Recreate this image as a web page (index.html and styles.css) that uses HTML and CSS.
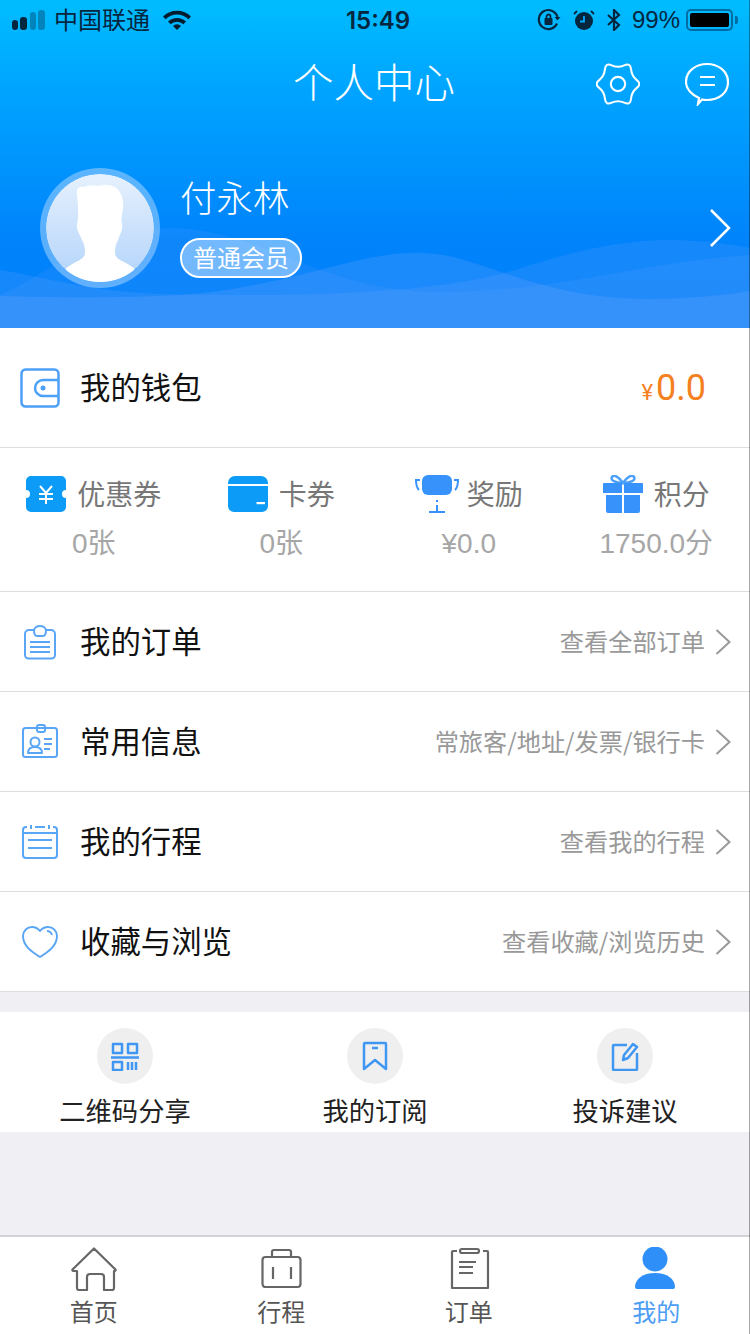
FILE: index.html
```html
<!DOCTYPE html>
<html lang="zh-CN">
<head>
<meta charset="utf-8">
<title>个人中心</title>
<link rel="stylesheet" href="styles.css">
</head>
<body>
<div class="app">
  <header class="header">
    <svg class="waves" viewBox="0 0 750 328" preserveAspectRatio="none" aria-hidden="true">
      <path class="wave-a" d="M0 295C40 280 90 228 170 228C260 228 320 292 440 292C560 292 640 262 750 255V328H0Z"/>
      <path class="wave-b" d="M0 296C60 298 130 298 180 295C260 290 330 265 375 257C400 252 420 252 435 254C480 258 530 292 620 298C670 301 720 296 750 291V328H0Z"/>
      <path class="wave-c" d="M0 270C30 274 90 292 160 294C260 296 420 298 515 270C570 252 620 240 670 240C700 240 730 244 750 248V328H0Z"/>
    </svg>
    <div class="status">
      <div class="status-left">
        <svg class="signal" viewBox="0 0 34 20"><rect x="0" y="10" width="6" height="10" rx="3"/><rect x="8" y="7" width="7" height="13" rx="3"/><rect class="dim" x="18" y="2" width="6" height="18" rx="3"/><rect class="dim" x="26" y="0" width="7" height="20" rx="3"/></svg>
        <span class="status-text">中国联通</span>
        <svg class="wifi" viewBox="0 0 28 20"><path d="M0 6.500a20 20 0 0 1 28 0l-2.600 2.800a16 16 0 0 0-22.800 0Z"/><path d="M5 11.500a13 13 0 0 1 18 0l-2.600 2.800a9 9 0 0 0-12.800 0Z"/><path d="M10 16a5.500 5.500 0 0 1 8 0l-4 4Z"/></svg>
      </div>
      <div class="status-time">15:49</div>
      <div class="status-right">
        <svg class="s-lock" viewBox="0 0 24 24"><path class="s-line" d="M20 15.500A9.500 9.500 0 1 1 20.500 9"/><path d="M17.500 9h6l-3 3.500Z"/><rect x="7.500" y="10" width="8" height="7" rx="1"/><path class="s-thin" d="M9.500 10V8.500a2 2 0 0 1 4 0V10"/></svg>
        <svg class="s-alarm" viewBox="0 0 22 22"><circle cx="11" cy="12" r="9"/><path class="s-cut" d="M11 7v5.500H7"/><path class="s-thin" d="M1 5l3-3M21 5l-3-3"/></svg>
        <svg class="s-bt" viewBox="0 0 16 22"><path class="s-line" d="M2 6l11 10-5 5V1l5 5L2 16"/></svg>
        <span class="s-pct">99%</span>
        <div class="battery"><div class="battery-fill"></div></div>
        <div class="battery-nub"></div>
      </div>
    </div>
    <div class="nav">
      <h1 class="nav-title">个人中心</h1>
      <div class="nav-actions">
        <svg class="nav-icon" viewBox="0 0 46 44"><path transform="translate(23 22)" d="M19.650-4.125Q25 0 19.650 4.125 14.300 8.250 13.650 15.400 13 22.500 6.500 19.500 0 16.500-6.500 19.500-13 22.500-13.650 15.400-14.300 8.250-19.650 4.125-25 0-19.650-4.125-14.300-8.250-13.650-15.400-13-22.500-6.500-19.500 0-16.500 6.500-19.500 13-22.500 13.650-15.400 14.300-8.250 19.650-4.125Z"/><circle cx="23" cy="22" r="7.500"/></svg>
        <svg class="nav-icon" viewBox="0 0 44 44"><path d="M13 42l1-6C7 33 1 27 1 20 1 9 11 2 22 2s21 7 21 18-9 18-21 18c-2 0-3.500 0-5-.5Z"/><path d="M15 15h15M15 23h15"/></svg>
      </div>
    </div>
    <div class="profile">
      <div class="avatar">
        <svg viewBox="0 0 108 108"><path d="M31 20C30 14 34 12 38 13 44 10 50 13 56 11 66 10 76 14 77 28 78 38 74 42 76 50 77 56 74 60 72 66 70 70 69 73 69 78 69 84 74 86 80 89L88 94V108H20V94L28 89C34 86 39 84 39 78 39 73 38 70 36 66 34 60 30 56 31 50 33 42 32 30 31 20Z"/></svg>
      </div>
      <div class="profile-info">
        <div class="profile-name">付永林</div>
        <div class="profile-badge">普通会员</div>
      </div>
      <svg class="profile-arrow" viewBox="0 0 22 40"><path d="M2 2l18 18L2 38"/></svg>
    </div>
  </header>

  <section class="wallet">
    <svg class="row-icon icon-wallet" viewBox="0 0 40 40"><rect x="1.500" y="1.500" width="37" height="37" rx="4"/><path d="M38 12H23a8 8 0 0 0 0 16h15"/><circle class="dot" cx="23" cy="20" r="2.500"/></svg>
    <span class="row-label">我的钱包</span>
    <span class="wallet-value"><small>¥</small>0.0</span>
  </section>

  <section class="stats">
    <div class="stat">
      <div class="stat-head">
        <svg class="stat-icon" viewBox="0 0 40 38"><path class="fill-sky" d="M5 1h30a5 5 0 0 1 5 5v9a4 4 0 0 0 0 8v9a5 5 0 0 1-5 5H5a5 5 0 0 1-5-5v-9a4 4 0 0 0 0-8V6a5 5 0 0 1 5-5Z"/><path class="yen" d="M14 11l6 7 6-7M13 19h14M13 24h14M20 18v11"/></svg>
        <span>优惠券</span>
      </div>
      <div class="stat-sub">0张</div>
    </div>
    <div class="stat">
      <div class="stat-head">
        <svg class="stat-icon" viewBox="0 0 40 38"><path class="fill-sky" d="M0 8a7 7 0 0 1 7-7h26a7 7 0 0 1 7 7v1H0ZM0 11h40v20a6 6 0 0 1-6 6H6a6 6 0 0 1-6-6Z"/><rect class="white-fill" x="28.500" y="27" width="8.500" height="2.200"/></svg>
        <span>卡券</span>
      </div>
      <div class="stat-sub">0张</div>
    </div>
    <div class="stat">
      <div class="stat-head stat-head-tight">
        <svg class="stat-icon trophy" viewBox="0 0 44 38"><rect class="fill-blue" x="7" y="0" width="30" height="20" rx="6"/><path class="trophy-line" d="M5 5H1c0 5 1 8 3 10M39 5h4c0 5-1 8-3 10M22 25v2M22 30v6M14 37h16"/></svg>
        <span>奖励</span>
      </div>
      <div class="stat-sub">¥0.0</div>
    </div>
    <div class="stat">
      <div class="stat-head">
        <svg class="stat-icon" viewBox="0 0 40 38"><path class="gift-bow" d="M20 8C16 2 11-1 9 2c-2 3 3 6 11 6 8 0 13-3 11-6-2-3-7 0-11 6Z"/><path class="fill-blue" d="M1 8h18v10H0V9a1 1 0 0 1 1-1ZM21 8h18a1 1 0 0 1 1 1v9H21ZM3 20h16v18H5a2 2 0 0 1-2-2ZM21 20h16v16a2 2 0 0 1-2 2H21Z"/></svg>
        <span>积分</span>
      </div>
      <div class="stat-sub">1750.0分</div>
    </div>
  </section>

  <section class="list">
    <a class="row">
      <svg class="row-icon line-icon" viewBox="0 0 40 40"><path d="M14 8H9a4 4 0 0 0-4 4v21a3.500 3.500 0 0 0 3.500 3.500h23a3.500 3.500 0 0 0 3.500-3.500V12a4 4 0 0 0-4-4h-5c-1-3-4-4-6-4s-5 1-6 4Z"/><path d="M14 8c0 3 1 6 3 6h6c2 0 3-3 3-6M10 20h20M10 25h20M10 30h20"/></svg>
      <span class="row-label">我的订单</span>
      <span class="row-hint">查看全部订单</span>
      <svg class="row-arrow" viewBox="0 0 16 26"><path d="M1.500 1l13 12-13 12"/></svg>
    </a>
    <a class="row">
      <svg class="row-icon line-icon" viewBox="0 0 40 40"><rect x="3" y="6" width="34" height="29" rx="2.500"/><rect x="17" y="3" width="8" height="7" rx="2"/><circle cx="15" cy="20" r="4.500"/><path d="M8 31c0-4 3-6 7-6s7 2 7 6ZM24 17h8M24 22h8M24 27h6"/></svg>
      <span class="row-label">常用信息</span>
      <span class="row-hint">常旅客/地址/发票/银行卡</span>
      <svg class="row-arrow" viewBox="0 0 16 26"><path d="M1.500 1l13 12-13 12"/></svg>
    </a>
    <a class="row">
      <svg class="row-icon line-icon" viewBox="0 0 40 40"><path d="M7 5H6a3 3 0 0 0-3 3v25a3 3 0 0 0 3 3h28a3 3 0 0 0 3-3V8a3 3 0 0 0-3-3h-1M15 5h10M11 3v4M29 3v4M3 11h34M8 18h24M8 26h24"/></svg>
      <span class="row-label">我的行程</span>
      <span class="row-hint">查看我的行程</span>
      <svg class="row-arrow" viewBox="0 0 16 26"><path d="M1.500 1l13 12-13 12"/></svg>
    </a>
    <a class="row">
      <svg class="row-icon line-icon" viewBox="0 0 40 40"><path d="M20 35C12 30 3 24 3 14 3 9 7 5 12 5c4 0 6 1.500 8 4 2-2.500 4-4 8-4 5 0 9 4 9 9 0 10-9 16-17 21Z"/><path d="M27 9c2 0 4 1 5 4"/></svg>
      <span class="row-label">收藏与浏览</span>
      <span class="row-hint">查看收藏/浏览历史</span>
      <svg class="row-arrow" viewBox="0 0 16 26"><path d="M1.500 1l13 12-13 12"/></svg>
    </a>
  </section>

  <section class="shortcuts">
    <div class="shortcut">
      <div class="shortcut-circle">
        <svg viewBox="0 0 30 30"><path d="M3 3h9v9H3ZM18 3h9v9h-9ZM3 21h9v8H3ZM1 16.500h28M18 21v8M22 21v8M26 21v8"/></svg>
      </div>
      <div class="shortcut-label">二维码分享</div>
    </div>
    <div class="shortcut">
      <div class="shortcut-circle">
        <svg viewBox="0 0 30 30"><path d="M5 2h20a1 1 0 0 1 1 1v25l-11-9-11 9V3a1 1 0 0 1 1-1ZM12 7h6"/></svg>
      </div>
      <div class="shortcut-label">我的订阅</div>
    </div>
    <div class="shortcut">
      <div class="shortcut-circle">
        <svg viewBox="0 0 30 30"><path d="M17 4H4a1 1 0 0 0-1 1v23a1 1 0 0 0 1 1h22a1 1 0 0 0 1-1V12M13 19l1-5L23 3l4 3-9 11Z"/></svg>
      </div>
      <div class="shortcut-label">投诉建议</div>
    </div>
  </section>

  <div class="spacer"></div>

  <nav class="tabs">
    <div class="tab">
      <svg class="tab-icon" viewBox="0 0 46 44"><path d="M6 41V24H2.500a1 1 0 0 1-.7-1.800L23 1.500l21.200 20.700a1 1 0 0 1-.7 1.800H43V41a2 2 0 0 1-2 2H33V30a3 3 0 0 0-3-3H19a3 3 0 0 0-3 3V43H8a2 2 0 0 1-2-2Z"/></svg>
      <span>首页</span>
    </div>
    <div class="tab">
      <svg class="tab-icon" viewBox="0 0 46 44"><rect x="4.500" y="10" width="38" height="30" rx="3"/><path d="M14 10V5a2 2 0 0 1 2-2h15a2 2 0 0 1 2 2v5M15 20v12M33 20v12"/></svg>
      <span>行程</span>
    </div>
    <div class="tab">
      <svg class="tab-icon" viewBox="0 0 46 44"><path d="M11 4H7a1 1 0 0 0-1 1v36h36V5a1 1 0 0 0-1-1h-4"/><rect x="14" y="2" width="19" height="4" rx="2"/><path d="M13 15h17M13 20h14M13 26h14"/></svg>
      <span>订单</span>
    </div>
    <div class="tab tab-active">
      <svg class="tab-icon" viewBox="0 0 46 44"><circle cx="22" cy="12" r="12.500"/><path d="M2 40c0-8 8-14 20-14s20 6 20 14a2 2 0 0 1-2 2H4a2 2 0 0 1-2-2Z"/></svg>
      <span>我的</span>
    </div>
  </nav>
</div>
</body>
</html>
```

FILE: styles.css
```css
* { box-sizing: border-box; margin: 0; padding: 0; }

html, body { width: 750px; height: 1334px; overflow: hidden; }

body {
  font-family: "Noto Sans CJK SC", "Noto Sans", sans-serif;
  background: #efeff4;
  color: #111;
}

.app {
  position: relative;
  width: 750px;
  height: 1334px;
  display: flex;
  flex-direction: column;
}

.app::after {
  content: "";
  position: absolute;
  top: 0;
  right: 0;
  bottom: 0;
  width: 1px;
  background: rgba(0, 0, 0, 0.35);
}

/* header */
.header {
  position: relative;
  height: 328px;
  flex: none;
  background: linear-gradient(180deg, #00bdff 0, #00a4ff 90px, #0083fb 240px, #0080fa 328px);
  overflow: hidden;
}

.waves {
  position: absolute;
  left: 0;
  top: 0;
  width: 750px;
  height: 328px;
}

.wave-a { fill: rgba(150, 180, 255, 0.1); }
.wave-b { fill: rgba(150, 180, 255, 0.18); }
.wave-c { fill: rgba(150, 180, 255, 0.14); }

.status, .nav, .profile { position: relative; }

.status {
  height: 40px;
  display: flex;
  align-items: center;
  padding: 0 12px;
  color: #04263f;
  font-size: 24px;
  justify-content: space-between;
}

.status-left, .status-right { display: flex; align-items: center; flex: 1; }
.status-right { justify-content: flex-end; }

.status-text { padding-bottom: 4px; }

.signal { width: 34px; height: 20px; fill: #04263f; margin-right: 8px; }
.signal .dim { opacity: 0.35; }
.wifi { width: 28px; height: 20px; fill: #031c2e; margin-left: 13px; }

.status-time {
  margin-left: 6px;
  font-family: "Inter", "Liberation Sans", sans-serif;
  font-size: 24px;
  font-weight: 600;
}

.s-lock { width: 24px; height: 24px; fill: #04263f; }
.s-line { fill: none; stroke: #04263f; stroke-width: 2.200; }
.s-thin { fill: none; stroke: #04263f; stroke-width: 1.800; }
.s-alarm { width: 22px; height: 22px; fill: #04263f; margin-left: 12px; }
.s-cut { fill: none; stroke: #00aaff; stroke-width: 1.800; }
.s-bt { width: 16px; height: 22px; margin-left: 11px; }

.s-pct {
  font-family: "Liberation Sans", sans-serif;
  font-size: 24px;
  margin-left: 10px;
  margin-right: 6px;
}

.battery {
  width: 47px;
  height: 22px;
  border: 2px solid rgba(4, 60, 100, 0.6);
  border-radius: 5px;
  padding: 2px;
}
.battery-fill { height: 100%; background: #000; border-radius: 2px; }
.battery-nub {
  width: 3px;
  height: 8px;
  margin-left: 2px;
  background: rgba(4, 60, 100, 0.6);
  border-radius: 0 2px 2px 0;
}

.nav {
  height: 88px;
  display: flex;
  align-items: center;
  justify-content: center;
}

.nav-title {
  color: #fff;
  font-size: 40.5px;
  font-weight: 300;
  line-height: 48px;
  padding-bottom: 6px;
  margin-right: 2px;
}

.nav-actions {
  position: absolute;
  right: 21px;
  top: 22px;
  display: flex;
  gap: 45px;
}

.nav-icon {
  width: 44px;
  height: 44px;
  fill: none;
  stroke: #fff;
  stroke-width: 2.200;
}

.profile {
  margin-top: 40px;
  padding: 0 19px 0 40px;
  display: flex;
  align-items: center;
}

.avatar {
  width: 120px;
  height: 120px;
  border-radius: 50%;
  border: 6px solid rgba(150, 205, 255, 0.6);
  background: linear-gradient(180deg, #e6f1fd, #b2d3fb);
  background-clip: padding-box;
  overflow: hidden;
  flex: none;
}

.avatar svg { display: block; width: 108px; height: 108px; fill: #fff; }

.profile-info {
  margin-left: 20px;
  padding-bottom: 3px;
  display: flex;
  flex-direction: column;
  align-items: flex-start;
  gap: 19px;
}

.profile-name {
  color: #fff;
  font-size: 36.5px;
  font-weight: 300;
  line-height: 44px;
}

.profile-badge {
  height: 40px;
  padding: 0 11px;
  border: 2px solid #fff;
  border-radius: 20px;
  background: rgba(255, 255, 255, 0.42);
  color: #fff;
  font-size: 24px;
  line-height: 34px;
}

.profile-arrow {
  margin-left: auto;
  width: 22px;
  height: 40px;
  fill: none;
  stroke: #fff;
  stroke-width: 2.500;
}

/* wallet */
.wallet {
  height: 120px;
  flex: none;
  background: #fff;
  border-bottom: 1px solid #dedede;
  display: flex;
  align-items: center;
  padding: 0 44px 0 20px;
}

.row-icon { width: 40px; height: 40px; flex: none; }

.icon-wallet { fill: none; stroke: #4da0f7; stroke-width: 2.500; }
.icon-wallet .dot { fill: #4da0f7; stroke: none; }

.row-label {
  margin-left: 20px;
  padding-bottom: 4px;
  font-size: 30.4px;
  color: #111;
  line-height: 40px;
}

.wallet-value {
  margin-left: auto;
  font-family: "Roboto", "Liberation Sans", sans-serif;
  font-weight: 400;
  font-size: 36px;
  color: #f5801f;
}
.wallet-value small { font-size: 22px; margin-right: 3px; }

/* stats */
.stats {
  height: 144px;
  flex: none;
  background: #fff;
  border-bottom: 1px solid #dedede;
  display: grid;
  grid-template-columns: repeat(4, 1fr);
  padding-top: 26px;
}

.stat { display: flex; flex-direction: column; align-items: center; }

.stat-head {
  display: flex;
  align-items: center;
  gap: 11px;
  height: 40px;
  font-size: 28px;
  color: #777;
}

.stat-head span { padding-bottom: 2px; }

.stat-head-tight { gap: 8px; }

.stat-icon { width: 40px; height: 38px; flex: none; }
.trophy { width: 44px; }

.fill-sky { fill: #0c9bf7; }
.fill-blue { fill: #3792fb; }
.white-fill { fill: #fff; }
.yen { fill: none; stroke: #fff; stroke-width: 2; }
.trophy-line { fill: none; stroke: #3792fb; stroke-width: 2; }
.gift-bow { fill: none; stroke: #4da0f7; stroke-width: 2.500; }

.stat-sub {
  margin-top: 10px;
  font-size: 28px;
  color: #a6a6a6;
  line-height: 40px;
  font-family: "Liberation Sans", "Noto Sans CJK SC", sans-serif;
}

/* list */
.list { flex: none; background: #fff; }

.row {
  height: 100px;
  display: flex;
  align-items: center;
  padding: 0 19px 0 20px;
  border-bottom: 1px solid #dedede;
}

.line-icon {
  fill: none;
  stroke: #5aa6f6;
  stroke-width: 2;
  stroke-linejoin: round;
}

.row-hint {
  margin-left: auto;
  padding-bottom: 2px;
  font-size: 24.2px;
  color: #999;
}

.row-arrow {
  margin-left: 10px;
  width: 16px;
  height: 26px;
  fill: none;
  stroke: #999;
  stroke-width: 2;
}

/* shortcuts */
.shortcuts {
  margin-top: 20px;
  height: 120px;
  flex: none;
  background: #fff;
  display: grid;
  grid-template-columns: repeat(3, 1fr);
  padding-top: 16px;
}

.shortcut { display: flex; flex-direction: column; align-items: center; }

.shortcut-circle {
  width: 56px;
  height: 56px;
  border-radius: 50%;
  background: #efefef;
  display: flex;
  align-items: center;
  justify-content: center;
}

.shortcut-circle svg {
  width: 30px;
  height: 30px;
  fill: none;
  stroke: #3f97f3;
  stroke-width: 2.500;
  stroke-linejoin: round;
}

.shortcut-label {
  margin-top: 8px;
  font-size: 26.3px;
  line-height: 36px;
  color: #222;
}

.spacer { flex: 1; }

/* tabs */
.tabs {
  height: 99px;
  flex: none;
  background: #fff;
  border-top: 2px solid #d2d2d8;
  display: grid;
  grid-template-columns: repeat(4, 1fr);
  padding-top: 10px;
}

.tab {
  display: flex;
  flex-direction: column;
  align-items: center;
  font-size: 24px;
  line-height: 34px;
  color: #555;
}

.tab-icon {
  width: 46px;
  height: 44px;
  fill: none;
  stroke: #666;
  stroke-width: 2.200;
  stroke-linejoin: round;
  margin-bottom: 3px;
}

.tab-active { color: #4c9df5; }
.tab-active .tab-icon { fill: #2f8ff8; stroke: none; }
```
